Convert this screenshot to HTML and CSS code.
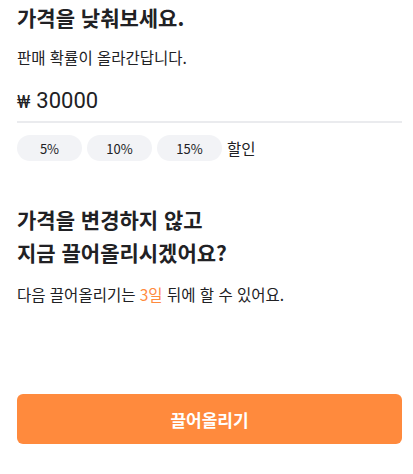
FILE: index.html
```html
<!DOCTYPE html>
<html lang="ko">
<head>
    <meta charset="UTF-8">
    <meta name="viewport" content="width=device-width, initial-scale=1.0">
    <title>끌어올리기</title>
    <link rel="stylesheet" href="styles.css">
</head>
<body>
    <div class="page">
        <h1 class="title">가격을 낮춰보세요.</h1>
        <p class="desc">판매 확률이 올라간답니다.</p>

        <div class="price-field">
            <span class="won">₩</span>
            <span class="price">30000</span>
        </div>

        <div class="discount-row">
            <button class="chip">5%</button>
            <button class="chip">10%</button>
            <button class="chip">15%</button>
            <span class="chip-label">할인</span>
        </div>

        <h2 class="title bump-title">가격을 변경하지 않고<br>지금 끌어올리시겠어요?</h2>
        <p class="desc next-info">다음 끌어올리기는 <span class="accent">3일</span> 뒤에 할 수 있어요.</p>

        <button class="bump-btn">끌어올리기</button>
    </div>
</body>
</html>
```

FILE: styles.css
```css
body {
    margin: 0;
    font-family: "Noto Sans CJK KR", "Noto Sans", sans-serif;
    background-color: #fff;
    color: #212124;
}
.page {
    display: flex;
    flex-direction: column;
    align-items: flex-start;
    min-height: 100vh;
    padding: 0 11px 30px 17px;
    box-sizing: border-box;
}
.title {
    font-size: 21px;
    font-weight: 700;
    line-height: 34px;
    margin: 0;
}
.desc {
    font-size: 15.5px;
    line-height: 22px;
    margin: 12px 0 0;
    color: #212124;
}
.price-field {
    align-self: stretch;
    display: flex;
    align-items: baseline;
    gap: 6px;
    margin-top: 20px;
    padding-bottom: 8px;
    border-bottom: 2px solid #eaebee;
    font-family: Roboto, "Noto Sans", sans-serif;
}
.won {
    font-size: 18px;
}
.price {
    font-size: 22px;
}
.discount-row {
    display: flex;
    align-items: center;
    gap: 5px;
    margin-top: 12px;
}
.chip {
    width: 65px;
    height: 26px;
    border: none;
    border-radius: 13px;
    background-color: #f2f3f6;
    color: #212124;
    font-family: "Noto Sans CJK KR", sans-serif;
    font-size: 13px;
    padding: 0;
}
.chip-label {
    font-size: 15.5px;
}
.bump-title {
    margin-top: 42px;
    line-height: 33px;
}
.next-info {
    margin-top: 14px;
}
.accent {
    color: #ff8a3d;
}
.bump-btn {
    align-self: stretch;
    margin-top: auto;
    height: 50px;
    border: none;
    border-radius: 6px;
    background-color: #ff8a3d;
    color: #fff;
    font-family: "Noto Sans CJK KR", sans-serif;
    font-size: 17px;
    font-weight: 700;
}
```
